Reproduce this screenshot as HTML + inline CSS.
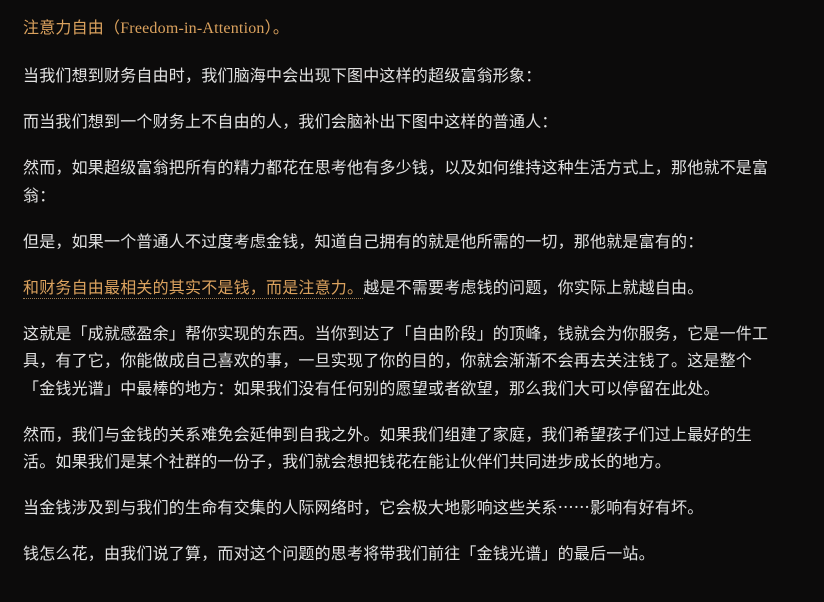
<!DOCTYPE html>
<html><head><meta charset="utf-8"><style>
body{margin:0;background:#0c0b0b;width:824px;height:602px;overflow:hidden}
.w{position:absolute;left:23px;top:13px;font-family:"Noto Sans CJK SC",sans-serif;font-size:16px;line-height:27.5px;color:#e2e2e2;letter-spacing:0.2px;white-space:nowrap}
p{margin:0 0 18.5px 0}
.o{color:#dba25e}
.u{color:#dba25e;border-bottom:1px dotted #9a7a50}
</style></head><body><div class="w">
<p class="o">注意力自由（<span style="font-family:'Liberation Serif',serif">Freedom-in-Attention</span>）。</p>
<p>当我们想到财务自由时，我们脑海中会出现下图中这样的超级富翁形象：</p>
<p>而当我们想到一个财务上不自由的人，我们会脑补出下图中这样的普通人：</p>
<p>然而，如果超级富翁把所有的精力都花在思考他有多少钱，以及如何维持这种生活方式上，那他就不是富<br>翁：</p>
<p>但是，如果一个普通人不过度考虑金钱，知道自己拥有的就是他所需的一切，那他就是富有的：</p>
<p><span class="u">和财务自由最相关的其实不是钱，而是注意力。</span>越是不需要考虑钱的问题，你实际上就越自由。</p>
<p>这就是「成就感盈余」帮你实现的东西。当你到达了「自由阶段」的顶峰，钱就会为你服务，它是一件工<br>具，有了它，你能做成自己喜欢的事，一旦实现了你的目的，你就会渐渐不会再去关注钱了。这是整个<br>「金钱光谱」中最棒的地方：如果我们没有任何别的愿望或者欲望，那么我们大可以停留在此处。</p>
<p>然而，我们与金钱的关系难免会延伸到自我之外。如果我们组建了家庭，我们希望孩子们过上最好的生<br>活。如果我们是某个社群的一份子，我们就会想把钱花在能让伙伴们共同进步成长的地方。</p>
<p>当金钱涉及到与我们的生命有交集的人际网络时，它会极大地影响这些关系……影响有好有坏。</p>
<p>钱怎么花，由我们说了算，而对这个问题的思考将带我们前往「金钱光谱」的最后一站。</p>
</div></body></html>
